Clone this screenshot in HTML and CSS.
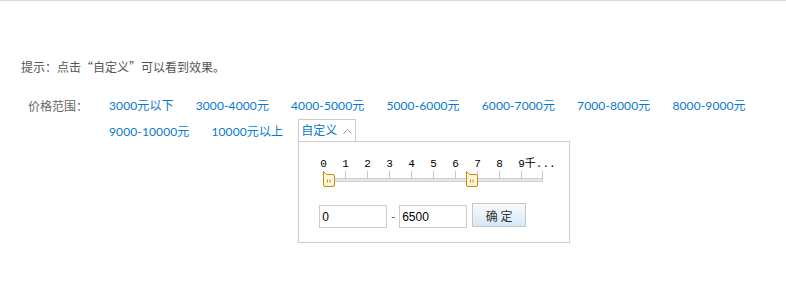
FILE: index.html
```html
<!DOCTYPE html>
<html lang="zh-CN">
<head>
    <meta charset="UTF-8">
    <meta name="viewport" content="width=device-width, initial-scale=1.0">
    <title>价格范围</title>
    <link rel="stylesheet" href="styles.css">
</head>
<body>
    <p class="tip">提示：点击“自定义”可以看到效果。</p>

    <div class="filter">
        <span class="filter-label">价格范围：</span>
        <div class="filter-options">
            <a href="#">3000元以下</a>
            <a href="#">3000-4000元</a>
            <a href="#">4000-5000元</a>
            <a href="#">5000-6000元</a>
            <a href="#">6000-7000元</a>
            <a href="#">7000-8000元</a>
            <a href="#">8000-9000元</a>
            <a href="#">9000-10000元</a>
            <a href="#">10000元以上</a>
            <div class="custom">
                <span>自定义</span>
                <svg class="chevron" width="9" height="6" viewBox="0 0 9 6">
                    <polyline points="0.5,5.5 4.5,1.5 8.5,5.5" fill="none" stroke="#9a9a9a" stroke-width="1"/>
                </svg>

                <div class="custom-panel">
                    <div class="slider">
                        <div class="scale-labels">
                            <span>0</span><span>1</span><span>2</span><span>3</span><span>4</span>
                            <span>5</span><span>6</span><span>7</span><span>8</span><span>9千...</span>
                        </div>
                        <div class="scale-ticks">
                            <i></i><i></i><i></i><i></i><i></i><i></i><i></i><i></i><i></i><i></i>
                        </div>
                        <div class="slider-track"></div>
                        <span class="slider-handle" style="left: 0%;">
                            <svg width="13" height="17" viewBox="0 0 13 17">
                                <path d="M0.5 0.5 L3.5 3.5 H10 Q11.5 3.5 11.5 5 V14 Q11.5 15.5 10 15.5 H2 Q0.5 15.5 0.5 14 Z" fill="#fff6d8" stroke="#c98a10"/>
                                <rect x="4" y="8.5" width="1" height="3" fill="#c98a10"/>
                                <rect x="6.5" y="8.5" width="1" height="3" fill="#c98a10"/>
                            </svg>
                        </span>
                        <span class="slider-handle" style="left: 65%;">
                            <svg width="13" height="17" viewBox="0 0 13 17">
                                <path d="M0.5 0.5 L3.5 3.5 H10 Q11.5 3.5 11.5 5 V14 Q11.5 15.5 10 15.5 H2 Q0.5 15.5 0.5 14 Z" fill="#fff6d8" stroke="#c98a10"/>
                                <rect x="4" y="8.5" width="1" height="3" fill="#c98a10"/>
                                <rect x="6.5" y="8.5" width="1" height="3" fill="#c98a10"/>
                            </svg>
                        </span>
                    </div>
                    <div class="range-inputs">
                        <input type="text" value="0">
                        <span class="dash">-</span>
                        <input type="text" value="6500">
                        <button type="button">确 定</button>
                    </div>
                </div>
            </div>
        </div>
    </div>
</body>
</html>
```

FILE: styles.css
```css
body {
    min-height: 100vh;
    box-sizing: border-box;
    margin: 0;
    border-top: 1px solid #d9d9d9;
    font-family: Lato, "Noto Sans CJK SC", sans-serif;
    font-size: 12px;
    color: #555;
}
.tip {
    margin: 0;
    padding: 57px 0 0 21px;
    font-family: "Noto Sans CJK SC", sans-serif;
    line-height: 18px;
}
.filter {
    display: flex;
    margin-top: 17px;
    padding-left: 28px;
    line-height: 26px;
}
.filter-label {
    flex: none;
    width: 81px;
    font-family: "Noto Sans CJK SC", sans-serif;
    color: #666;
}
.filter-options {
    display: flex;
    flex-wrap: wrap;
    align-items: flex-start;
    column-gap: 22px;
    width: 670px;
}
.filter-options a {
    color: #0a78cc;
    text-decoration: none;
    letter-spacing: 0.12px;
}
.custom {
    position: relative;
    display: flex;
    align-items: center;
    gap: 6px;
    height: 23px;
    box-sizing: border-box;
    margin-left: -7px;
    padding: 0 3px 0 2px;
    border: 1px solid #ccc;
    color: #0a78cc;
    line-height: 21px;
}
.chevron {
    display: block;
}
.custom-panel {
    position: absolute;
    top: 100%;
    left: -1px;
    z-index: 2;
    width: 272px;
    box-sizing: border-box;
    padding: 15px 20px 14px;
    border: 1px solid #ccc;
    background: #fff;
    color: #222;
    line-height: normal;
}
.slider {
    position: relative;
    width: 220px;
    height: 46px;
    margin-left: 4px;
}
.scale-labels {
    display: flex;
    height: 14px;
    margin-left: -3px;
    font-family: "Liberation Mono", "Noto Sans CJK SC", monospace;
    font-size: 11px;
    line-height: 14px;
    color: #000;
}
.scale-labels span {
    flex: none;
    width: 22px;
    white-space: nowrap;
}
.scale-ticks {
    display: flex;
    height: 7px;
}
.scale-ticks i {
    flex: none;
    width: 22px;
    box-sizing: border-box;
    border-left: 1px solid #c9c9c9;
}
.scale-ticks i:last-child {
    border-right: 1px solid #c9c9c9;
}
.slider-track {
    width: 220px;
    height: 4px;
    box-sizing: border-box;
    border: 1px solid #cfcfcf;
    background: #e8e8e8;
}
.slider-handle {
    position: absolute;
    top: 14px;
    width: 13px;
    height: 17px;
}
.slider-handle svg {
    display: block;
}
.range-inputs {
    display: flex;
    align-items: flex-start;
    height: 25px;
}
.range-inputs input {
    width: 68px;
    height: 23px;
    box-sizing: border-box;
    margin: 2px 0 0;
    padding: 0 2px;
    border: 1px solid #ccc;
    font-family: "Liberation Sans", sans-serif;
    font-size: 12px;
    color: #000;
    outline: none;
}
.dash {
    width: 12px;
    margin-top: 2px;
    text-align: center;
    line-height: 23px;
    color: #555;
}
.range-inputs button {
    width: 54px;
    height: 24px;
    margin-left: 5px;
    padding: 0;
    border: 1px solid #c6c6c6;
    background: linear-gradient(#f8fbfd, #d6e8f6);
    font-family: "Noto Sans CJK SC", sans-serif;
    font-size: 12px;
    color: #333;
    cursor: pointer;
}
```
